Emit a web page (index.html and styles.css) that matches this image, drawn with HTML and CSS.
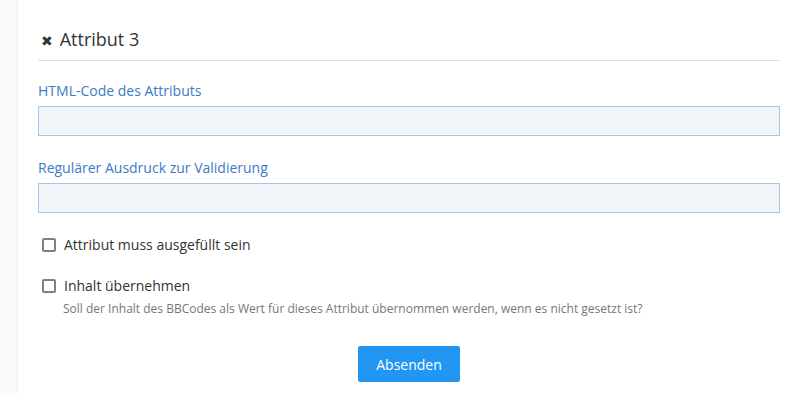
FILE: index.html
```html
<!DOCTYPE html>
<html lang="de">
<head>
    <meta charset="UTF-8">
    <title>Attribut 3</title>
    <link rel="stylesheet" href="styles.css">
</head>
<body>
    <div class="sidebar"></div>
    <div class="main">
        <h2 class="section-title">
            <span class="remove">&#10006;</span> Attribut 3
        </h2>
        <dl class="field">
            <dt><label for="html">HTML-Code des Attributs</label></dt>
            <dd><input type="text" id="html"></dd>
        </dl>
        <dl class="field">
            <dt><label for="regex">Regulärer Ausdruck zur Validierung</label></dt>
            <dd><input type="text" id="regex"></dd>
        </dl>
        <div class="check">
            <label><span class="box"></span> Attribut muss ausgefüllt sein</label>
        </div>
        <div class="check">
            <label><span class="box"></span> Inhalt übernehmen</label>
            <small>Soll der Inhalt des BBCodes als Wert für dieses Attribut übernommen werden, wenn es nicht gesetzt ist?</small>
        </div>
        <div class="submit">
            <button>Absenden</button>
        </div>
    </div>
</body>
</html>
```

FILE: styles.css
```css
body {
    margin: 0;
    display: flex;
    min-height: 393px;
    font-family: "Open Sans", Arial, sans-serif;
    color: #333;
    background: #fff;
}
.sidebar {
    width: 17px;
    flex-shrink: 0;
    background-color: #f9f9f9;
    border-right: 1px solid #eceef0;
}
.main {
    flex: 1;
    padding: 0 20px;
}
.section-title {
    margin: 0 0 20px;
    padding: 27px 0 7px;
    font-size: 18px;
    font-weight: normal;
    line-height: 24px;
    color: #333;
    border-bottom: 1px solid #dddddd;
}
.remove {
    font-size: 14px;
    color: #333;
    margin-left: 3px;
    margin-right: 2px;
}
.field {
    margin: 0 0 22px;
}
.field dt {
    font-size: 14px;
    line-height: 20px;
    color: #3c7bc6;
    margin-bottom: 5px;
}
.field dd {
    margin: 0;
}
.field input {
    display: block;
    width: 100%;
    height: 30px;
    box-sizing: border-box;
    background-color: #f0f5fa;
    border: 1px solid #a8c6e4;
    border-radius: 0;
    font: inherit;
}
.check {
    margin: 0 0 21px 4px;
}
.check label {
    display: flex;
    align-items: center;
    font-size: 14px;
    line-height: 20px;
    color: #333;
}
.box {
    width: 10px;
    height: 10px;
    border: 2px solid #7e7e8a;
    border-radius: 2px;
    margin-right: 8px;
}
.check small {
    display: block;
    margin-top: 4px;
    margin-left: 21px;
    font-size: 12px;
    color: #777;
}
.submit {
    text-align: center;
    margin-top: 29px;
}
button {
    background-color: #2196f3;
    color: #fff;
    font: inherit;
    font-size: 14px;
    padding: 0 18px;
    height: 36px;
    border: none;
    border-radius: 2px;
    cursor: pointer;
}
```
